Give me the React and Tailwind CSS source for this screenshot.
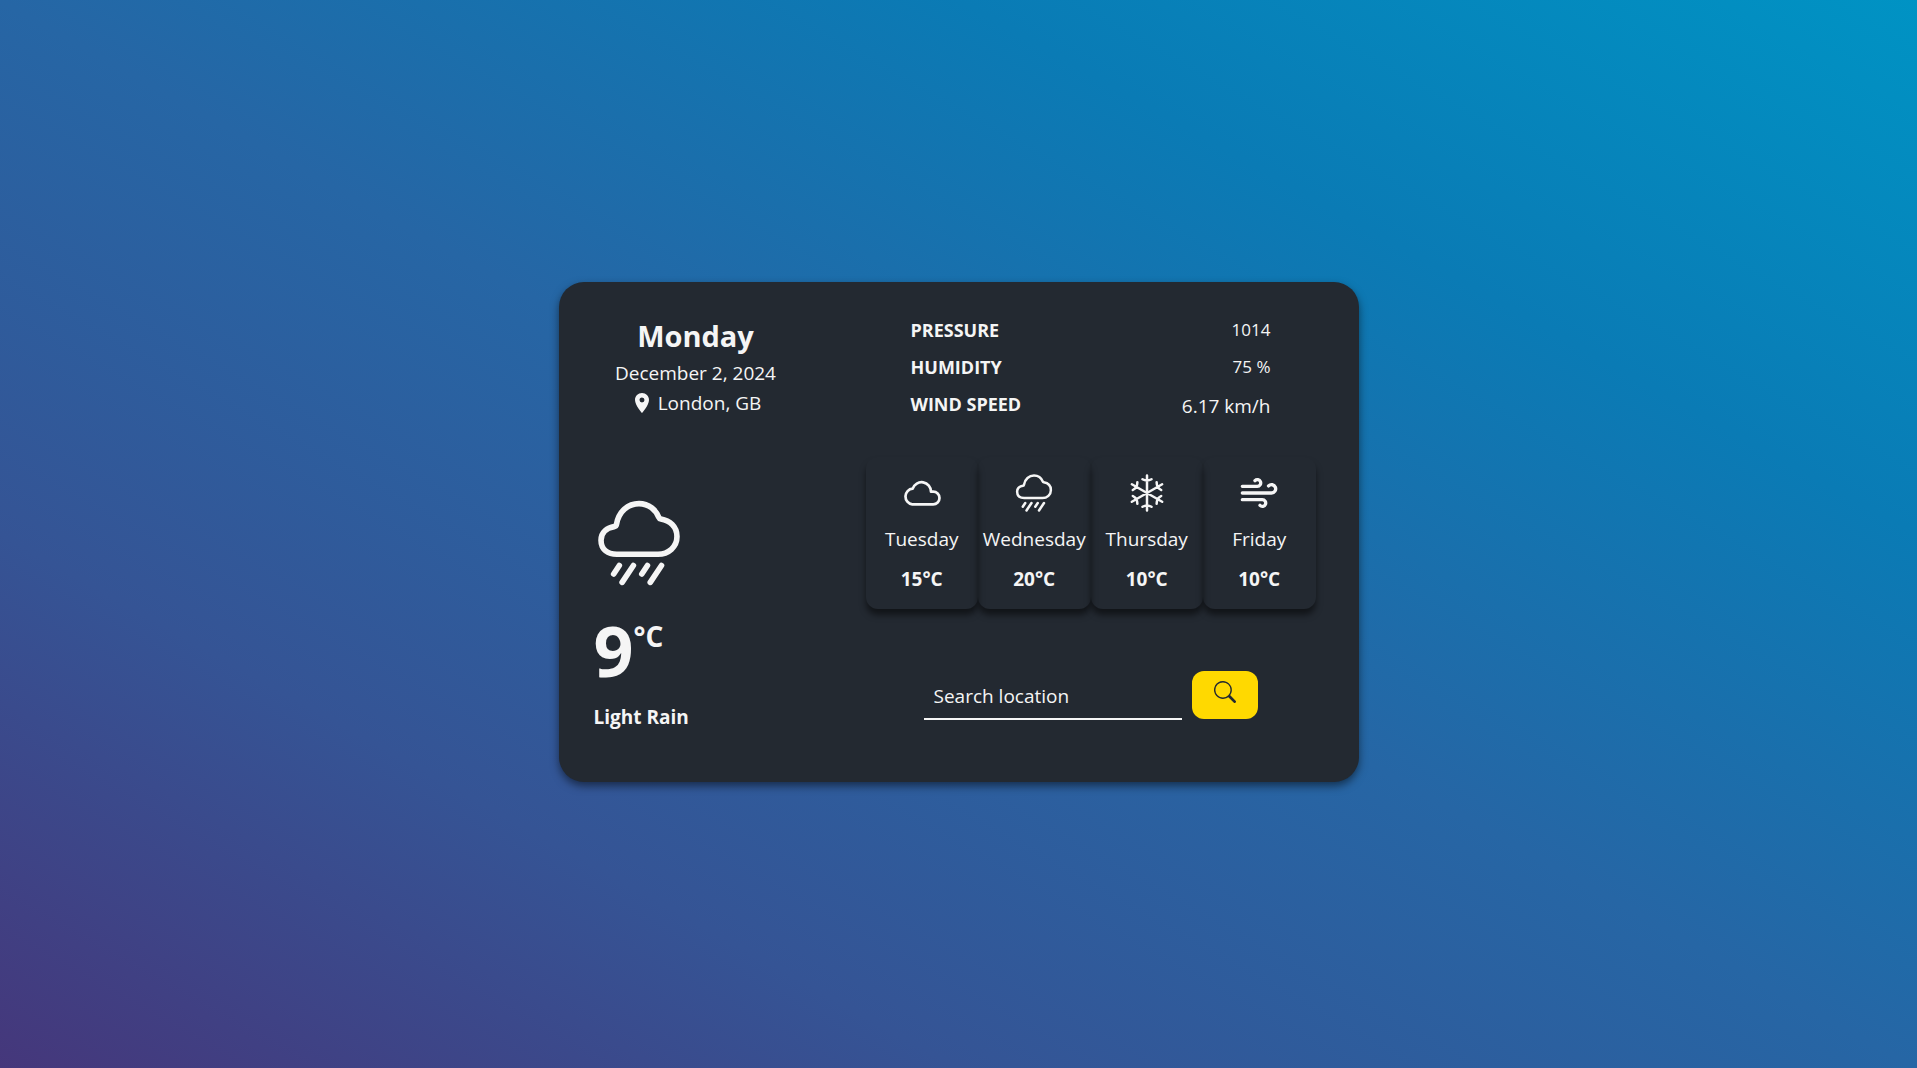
import { BsSearch } from "react-icons/bs";
import { FiWind } from "react-icons/fi";
import { IoRainyOutline, IoSnowOutline } from "react-icons/io5";
import { MdLocationOn } from "react-icons/md";

function CloudIcon(props) {
  return (
    <svg
      viewBox="0 0 40 40"
      fill="none"
      stroke="currentColor"
      strokeWidth="2.7"
      strokeLinecap="round"
      strokeLinejoin="round"
      {...props}
    >
      <path d="M10.3 31.3A7.9 7.9 0 0 1 10.7 15.6A9.4 9.4 0 0 1 29 18.7H31.2A6.3 6.3 0 0 1 31.2 31.3Z" />
    </svg>
  );
}

const details = [
  { label: "PRESSURE", value: "1014", size: "text-[17px] leading-6" },
  { label: "HUMIDITY", value: "75 %", size: "text-[17px] leading-6" },
  { label: "WIND SPEED", value: "6.17 km/h", size: "text-[19px] leading-7" },
];

const forecast = [
  { day: "Tuesday", temp: "15°C", Icon: CloudIcon },
  { day: "Wednesday", temp: "20°C", Icon: IoRainyOutline },
  { day: "Thursday", temp: "10°C", Icon: IoSnowOutline },
  { day: "Friday", temp: "10°C", Icon: FiWind },
];

function Today() {
  return (
    <section className="flex flex-col">
      <header className="text-center">
        <h1 className="text-[29px] leading-9 font-bold">Monday</h1>
        <p className="mt-1 text-[19px] leading-[30px]">December 2, 2024</p>
        <p className="flex items-center justify-center gap-1 text-[19px] leading-[30px]">
          <MdLocationOn className="size-6" aria-hidden="true" />
          London, GB
        </p>
      </header>
      <IoRainyOutline className="mt-20 size-[90px]" aria-hidden="true" />
      <p className="mt-6 flex items-start font-bold">
        <span className="text-[70px] leading-[76px]">9</span>
        <span className="text-[28px] leading-[48px]">°C</span>
      </p>
      <p className="mt-4 text-[19px] leading-[26px] font-bold">Light Rain</p>
    </section>
  );
}

function Details() {
  return (
    <dl className="mx-auto w-4/5">
      {details.map(({ label, value, size }) => (
        <div key={label} className="flex h-[37px] items-start justify-between">
          <dt className="text-[18px] leading-6 font-bold">{label}</dt>
          <dd className={size}>{value}</dd>
        </div>
      ))}
    </dl>
  );
}

function Forecast() {
  return (
    <ul className="mt-7 grid grid-cols-4">
      {forecast.map(({ day, temp, Icon }) => (
        <li
          key={day}
          className="flex flex-col items-center rounded-xl py-4 shadow-[0_6px_6px_rgba(0,0,0,0.5)]"
        >
          <Icon className="size-10" aria-hidden="true" />
          <span className="mt-3 text-[19px] leading-7">{day}</span>
          <span className="mt-3 text-[19px] leading-7 font-bold">{temp}</span>
        </li>
      ))}
    </ul>
  );
}

function Search() {
  return (
    <form className="mt-[62px] flex justify-center gap-[10px]" onSubmit={(e) => e.preventDefault()}>
      <input
        type="text"
        aria-label="Search location"
        placeholder="Search location"
        className="h-[49px] w-[258px] border-b-2 border-[#f5f5f5] bg-transparent px-[10px] pt-0.5 text-[19px] outline-none placeholder:text-[#f5f5f5]"
      />
      <button
        type="submit"
        aria-label="Search"
        className="flex h-12 w-[66px] justify-center rounded-xl bg-[#ffd900] pt-[10px] text-[#232931]"
      >
        <BsSearch className="size-[22px]" aria-hidden="true" />
      </button>
    </form>
  );
}

export default function App() {
  return (
    <main className="flex min-h-screen items-center justify-center bg-[linear-gradient(to_right_top,#45377b,#355495,#2666a5,#0a7bb5,#0093c4)] pb-1 font-['Open_Sans',sans-serif] text-[#f5f5f5]">
      <div className="grid w-full max-w-[800px] grid-cols-[204px_1fr] gap-[68px] rounded-[25px] bg-[#232931] pt-9 pr-[43px] pb-[52px] pl-[35px] shadow-[0_4px_8px_rgba(0,0,0,0.5)]">
        <Today />
        <section>
          <Details />
          <Forecast />
          <Search />
        </section>
      </div>
    </main>
  );
}
